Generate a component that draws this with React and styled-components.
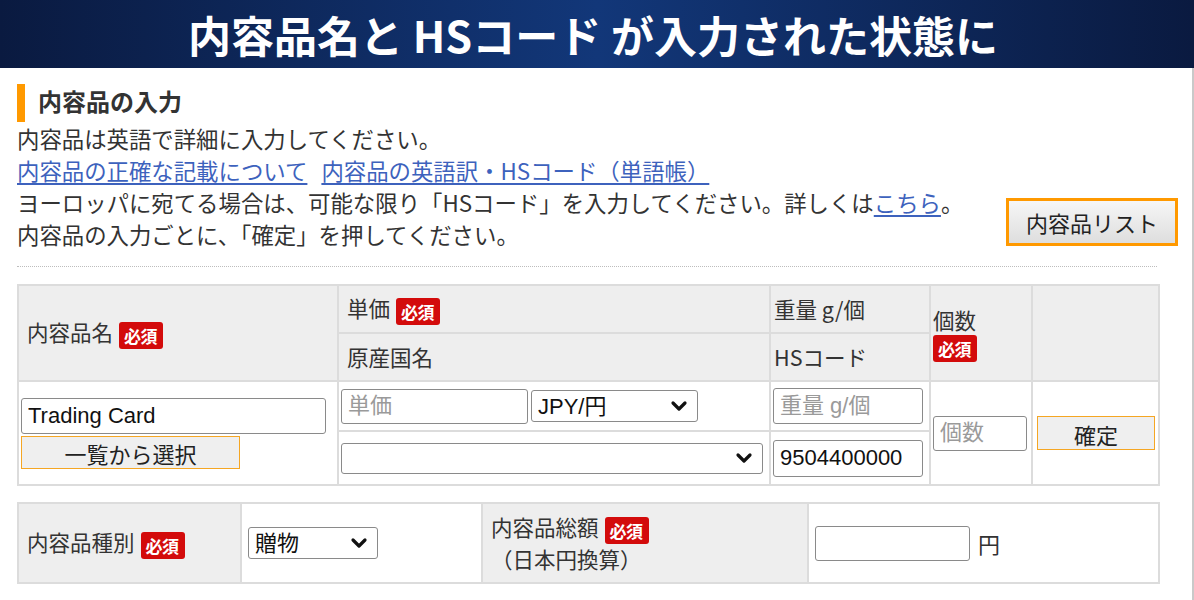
import React from "react";
import styled, { createGlobalStyle } from "styled-components";
import { ChevronDown } from "lucide-react";

const GlobalStyle = createGlobalStyle`
  html, body {
    margin: 0;
    padding: 0;
    background: #fff;
  }
  body {
    font-family: "Noto Sans CJK JP", "Noto Sans", sans-serif;
    color: #333;
  }
`;

const Page = styled.div`
  width: 1194px;
  min-height: 600px;
  box-sizing: border-box;
`;

const Banner = styled.header`
  height: 68px;
  background: linear-gradient(90deg, #0a1a40 0%, #123779 50%, #0a1a40 100%);
  display: flex;
  align-items: center;
  justify-content: center;
`;

const BannerTitle = styled.h1`
  margin: 0 0 0 -8px;
  color: #fff;
  font-size: 43px;
  font-weight: 700;
  line-height: 1;
  font-family: "Noto Sans CJK JP", "Noto Sans", sans-serif;
`;

const Main = styled.main`
  border-right: 2px solid #c9c9c9;
  min-height: 532px;
  padding: 16px 0 0 17px;
  box-sizing: border-box;
`;

const SectionTitle = styled.h2`
  margin: 0;
  height: 38px;
  border-left: 8px solid #ff9900;
  padding-left: 13px;
  font-size: 24px;
  font-weight: 700;
  line-height: 34px;
  color: #333;
`;

const InfoRow = styled.div`
  display: flex;
  justify-content: space-between;
  width: 1161px;
`;

const InfoText = styled.div`
  font-size: 22.4px;
  line-height: 32px;
  color: #333;
`;

const Line = styled.p`
  margin: 0;
  white-space: nowrap;
`;

const Link = styled.a`
  color: #3d62bd;
  text-decoration: underline;
  text-underline-offset: 3px;
  margin-right: ${(p) => (p.$gap ? "14px" : "0")};
`;

const ListButton = styled.button`
  align-self: flex-end;
  margin-bottom: 4px;
  width: 172px;
  height: 48px;
  border: 3px solid #ff9900;
  background: linear-gradient(#f6f6f6, #dedede);
  font-family: "Noto Sans CJK JP", sans-serif;
  font-size: 22px;
  color: #222;
  padding: 0;
`;

const Divider = styled.hr`
  margin: 16px 0 17px;
  width: 1140px;
  border: none;
  border-top: 1px dotted #bdbdbd;
`;

const Table = styled.table`
  width: 1141px;
  border-collapse: collapse;
  table-layout: fixed;
  border: 2px solid #dcdcdc;
  margin-bottom: ${(p) => p.$mb || "0"};
`;

const Th = styled.td`
  background: #eeeeee;
  border: 2px solid #dcdcdc;
  font-size: 21.5px;
  color: #333;
  padding: 0 ${(p) => p.$pad || "8px"};
  height: ${(p) => p.$h || "auto"};
  vertical-align: middle;
  line-height: 30px;
  white-space: nowrap;
`;

const Td = styled.td`
  background: #fff;
  border: 2px solid #dcdcdc;
  padding: 0 ${(p) => p.$pad || "2px"};
  height: ${(p) => p.$h || "auto"};
  vertical-align: middle;
  font-size: 20px;
`;

const Badge = styled.span`
  display: inline-block;
  background: #d30b0b;
  color: #fff;
  font-size: 17px;
  font-weight: 700;
  line-height: 27px;
  height: 27px;
  padding: 0 6px 0 5px;
  border-radius: 3px;
  vertical-align: middle;
  margin-left: ${(p) => (p.$block ? "0" : "6px")};
  letter-spacing: -0.5px;
`;

const Stack = styled.div`
  display: flex;
  flex-direction: column;
  align-items: flex-start;
  gap: ${(p) => p.$gap || "2px"};
`;

const Inline = styled.div`
  display: flex;
  align-items: center;
  gap: ${(p) => p.$gap || "3px"};
`;

const TextInput = styled.input`
  box-sizing: border-box;
  width: ${(p) => p.$w};
  height: ${(p) => p.$h || "35px"};
  border: 1px solid #8a8a8a;
  border-radius: 3px;
  padding: 0 6px;
  font-family: "Liberation Sans", "Noto Sans CJK JP", sans-serif;
  font-size: 22px;
  color: #111;
  background: #fff;
  &::placeholder {
    color: #9a9a9a;
  }
`;

const SelectWrap = styled.span`
  position: relative;
  display: inline-flex;
  width: ${(p) => p.$w};
  height: ${(p) => p.$h || "32px"};
  svg {
    position: absolute;
    right: 7px;
    top: 50%;
    transform: translateY(-50%);
    pointer-events: none;
    color: #111;
  }
`;

const Select = styled.select`
  appearance: none;
  box-sizing: border-box;
  width: 100%;
  height: 100%;
  border: 1px solid #8a8a8a;
  border-radius: 3px;
  padding: 0 28px 0 6px;
  font-family: "Liberation Sans", "Noto Sans CJK JP", sans-serif;
  font-size: 22px;
  color: #111;
  background: #fff;
`;

const FormButton = styled.button`
  box-sizing: border-box;
  width: ${(p) => p.$w};
  height: ${(p) => p.$h || "34px"};
  border: 1px solid #f5a623;
  background: #efefef;
  font-family: "Noto Sans CJK JP", sans-serif;
  font-size: 22px;
  line-height: 1;
  color: #222;
  padding: 2px 0 0;
`;

const Yen = styled.span`
  font-size: 22px;
  color: #333;
`;

const Dropdown = ({ w, h, value, label }) => (
  <SelectWrap $w={w} $h={h}>
    <Select defaultValue={value}>
      <option value={value}>{label}</option>
    </Select>
    <ChevronDown size={24} strokeWidth={3.2} />
  </SelectWrap>
);

export default function App() {
  return (
    <Page>
      <GlobalStyle />
      <Banner>
        <BannerTitle>内容品名と HSコード が入力された状態に</BannerTitle>
      </Banner>
      <Main>
        <SectionTitle>内容品の入力</SectionTitle>
        <InfoRow>
          <InfoText>
            <Line>内容品は英語で詳細に入力してください。</Line>
            <Line>
              <Link href="#" $gap>内容品の正確な記載について</Link>
              <Link href="#">内容品の英語訳・HSコード（単語帳）</Link>
            </Line>
            <Line>
              ヨーロッパに宛てる場合は、可能な限り「HSコード」を入力してください。詳しくは
              <Link href="#">こちら</Link>。
            </Line>
            <Line>内容品の入力ごとに、「確定」を押してください。</Line>
          </InfoText>
          <ListButton>内容品リスト</ListButton>
        </InfoRow>
        <Divider />

        <Table $mb="16px">
          <colgroup>
            <col style={{ width: 320 }} />
            <col style={{ width: 432 }} />
            <col style={{ width: 160 }} />
            <col style={{ width: 102 }} />
            <col style={{ width: 127 }} />
          </colgroup>
          <tbody>
            <tr>
              <Th rowSpan={2}>
                内容品名<Badge>必須</Badge>
              </Th>
              <Th $h="46px">
                単価<Badge>必須</Badge>
              </Th>
              <Th $pad="3px">重量 g/個</Th>
              <Th rowSpan={2} $pad="2px">
                <Stack $gap="0px">
                  <span>個数</span>
                  <Badge $block>必須</Badge>
                </Stack>
              </Th>
              <Th rowSpan={2} />
            </tr>
            <tr>
              <Th $h="46px">原産国名</Th>
              <Th $pad="3px">HSコード</Th>
            </tr>
            <tr>
              <Td rowSpan={2}>
                <Stack>
                  <TextInput $w="305px" $h="36px" defaultValue="Trading Card" />
                  <FormButton $w="219px" $h="33px">一覧から選択</FormButton>
                </Stack>
              </Td>
              <Td $h="48px">
                <Inline>
                  <TextInput $w="187px" placeholder="単価" />
                  <Dropdown w="167px" value="jpy" label="JPY/円" />
                </Inline>
              </Td>
              <Td>
                <TextInput $w="150px" $h="36px" placeholder="重量 g/個" />
              </Td>
              <Td rowSpan={2}>
                <TextInput $w="94px" placeholder="個数" />
              </Td>
              <Td rowSpan={2} $pad="4px">
                <FormButton $w="118px">確定</FormButton>
              </Td>
            </tr>
            <tr>
              <Td $h="52px">
                <Dropdown w="422px" h="31px" value="" label="" />
              </Td>
              <Td>
                <TextInput $w="150px" $h="37px" defaultValue="9504400000" />
              </Td>
            </tr>
          </tbody>
        </Table>

        <Table>
          <colgroup>
            <col style={{ width: 223 }} />
            <col style={{ width: 241 }} />
            <col style={{ width: 326 }} />
            <col style={{ width: 351 }} />
          </colgroup>
          <tbody>
            <tr>
              <Th $h="78px">
                内容品種別<Badge>必須</Badge>
              </Th>
              <Td $pad="6px">
                <Dropdown w="130px" value="gift" label="贈物" />
              </Td>
              <Th>
                <div>
                  内容品総額<Badge>必須</Badge>
                </div>
                <div>（日本円換算）</div>
              </Th>
              <Td $pad="6px">
                <Inline $gap="8px">
                  <TextInput $w="155px" />
                  <Yen>円</Yen>
                </Inline>
              </Td>
            </tr>
          </tbody>
        </Table>
      </Main>
    </Page>
  );
}
